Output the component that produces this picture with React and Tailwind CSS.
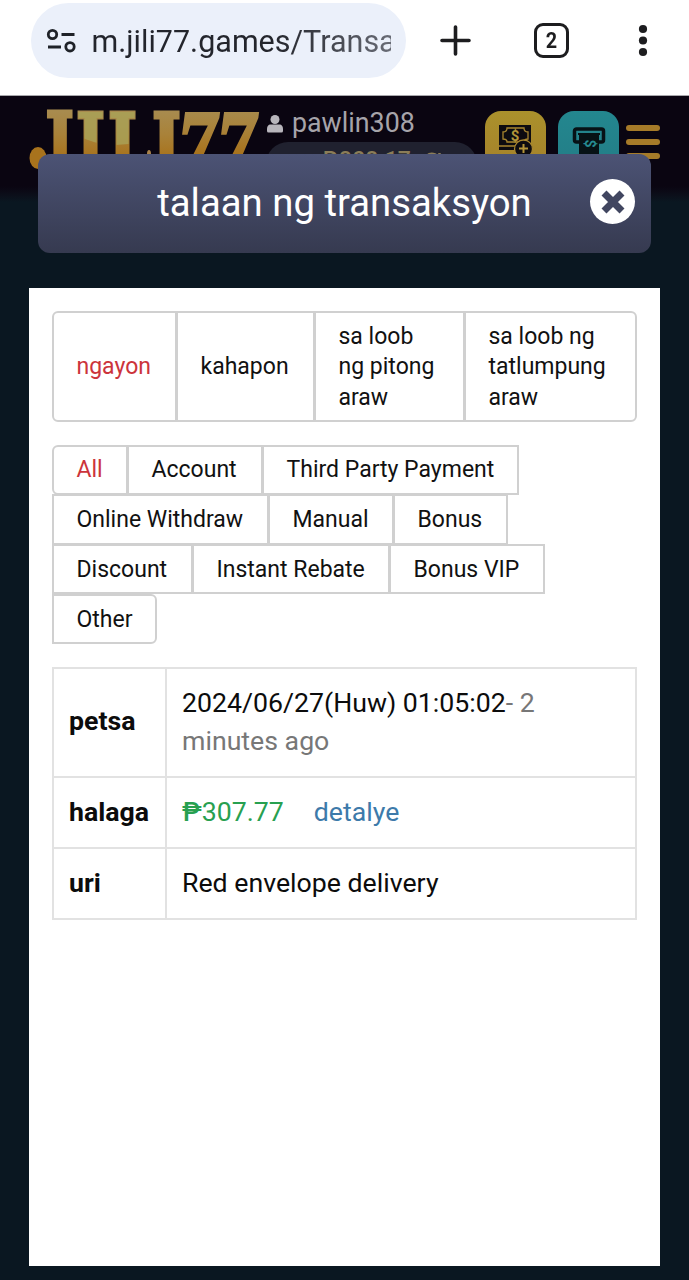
import React from "react";

const dateTabs = [
  { label: "ngayon", size: "w-[125px] rounded-l-md", active: true },
  { label: "kahapon", size: "w-[139px] -ml-px" },
  { label: "sa loob ng pitong araw", size: "w-[151px] -ml-px" },
  { label: "sa loob ng tatlumpung araw", size: "w-[173px] -ml-px rounded-r-md" },
];

const typeRows = [
  [
    { label: "All", size: "w-[76px] rounded-l-md", active: true },
    { label: "Account", size: "w-[136px] -ml-px" },
    { label: "Third Party Payment", size: "w-[257px] -ml-px" },
  ],
  [
    { label: "Online Withdraw", size: "w-[217px]" },
    { label: "Manual", size: "w-[126px] -ml-px" },
    { label: "Bonus", size: "w-[115px] -ml-px" },
  ],
  [
    { label: "Discount", size: "w-[141px]" },
    { label: "Instant Rebate", size: "w-[198px] -ml-px" },
    { label: "Bonus VIP", size: "w-[156px] -ml-px" },
  ],
  [{ label: "Other", size: "w-[105px] rounded-r-md" }],
];

const SiteSettingsIcon = () => (
  <svg className="w-[30px] h-[26px] shrink-0" viewBox="0 0 30 26" fill="none" stroke="#1f2228" strokeWidth="2.8">
    <circle cx="6.500" cy="6.500" r="4.2" />
    <path d="M15.500 6.500h13M2 19h13" />
    <circle cx="24" cy="18.800" r="4.200" />
  </svg>
);

const BrowserBar = () => (
  <div className="flex items-start h-24 pt-[3px] bg-white border-b border-[#a8a8ac]">
    <div className="flex items-center ml-[31px] w-[375px] h-[75px] rounded-full bg-[#ebf0fa] pl-[15px]">
      <SiteSettingsIcon />
      <div className="ml-[15.500px] mt-[3px] w-[299px] overflow-hidden whitespace-nowrap text-[30.500px] leading-[40px] bg-linear-to-r from-[#23252c] from-60% to-[#686b75] bg-clip-text text-transparent">
        m.jili77.games/Transaction
      </div>
    </div>
    <svg className="ml-[34px] mt-[22px] w-[31px] h-[31px]" viewBox="0 0 31 31" stroke="#1d1d1f" strokeWidth="3.6" strokeLinecap="round">
      <path d="M15.500 2v27M2 15.500h27" />
    </svg>
    <div className="ml-[63px] mt-5 w-[35px] h-[35px] rounded-[9px] border-[3.500px] border-[#1d1d1f] flex items-center justify-center text-[22px] leading-none font-bold text-[#1d1d1f]">
      <span className="scale-x-90">2</span>
    </div>
    <svg className="ml-[69px] mt-[21px] w-[10px] h-[33px]" viewBox="0 0 10 33" fill="#1d1d1f">
      <circle cx="5" cy="5" r="4.100" />
      <circle cx="5" cy="16.500" r="4.100" />
      <circle cx="5" cy="28" r="4.100" />
    </svg>
  </div>
);

const Logo = () => (
  <svg
    className="w-[234px] h-[80px] shrink-0"
    viewBox="0 0 234 80"
    fontFamily="DejaVu Serif, serif"
    fontWeight="bold"
    fill="url(#gold)"
    stroke="url(#gold)"
    strokeWidth="3"
  >
    <defs>
      <linearGradient id="gold" gradientUnits="userSpaceOnUse" x1="0" y1="-75" x2="0" y2="0">
        <stop offset="0" stopColor="#a88b4e" />
        <stop offset="0.3" stopColor="#a98239" />
        <stop offset="0.6" stopColor="#a8731d" />
        <stop offset="1" stopColor="#9c671a" />
      </linearGradient>
      <clipPath id="letters">
        <text transform="translate(47.500 80) scale(0.63 1)" fontSize="102">I</text>
        <text transform="translate(79.500 80) scale(0.63 1)" fontSize="102">L</text>
      </clipPath>
    </defs>
    <text transform="translate(17 80) scale(0.6 1)" fontSize="102">J</text>
    <text transform="translate(47.500 80) scale(0.63 1)" fontSize="102">I</text>
    <text transform="translate(79.500 80) scale(0.63 1)" fontSize="102">L</text>
    <text transform="translate(123.500 80) scale(0.63 1)" fontSize="102">I</text>
    <g fontFamily="Liberation Serif, serif" fontStyle="italic">
      <text transform="translate(149 76) scale(0.74 1)" fontSize="106">7</text>
      <text transform="translate(188 76) scale(0.74 1)" fontSize="106">7</text>
    </g>
    <ellipse cx="10" cy="51" rx="8.500" ry="11" fill="#a8731d" stroke="none" />
    <ellipse cx="121" cy="47" rx="2" ry="4" fill="#a8824a" stroke="none" />
    <ellipse cx="88" cy="2" rx="56" ry="36" fill="#a9a358" fillOpacity="0.8" stroke="none" clipPath="url(#letters)" />
  </svg>
);

const DepositIcon = () => (
  <svg className="w-[36px] h-[36px]" viewBox="0 0 36 36" fill="none">
    <path d="M1 1h32v25H1z" fill="#0d0b10" />
    <path d="M9 4h17c0 3 2 4 4 4v7c-2 0-4 1-4 3H9c0-2-2-3-4-3V8c2 0 4-1 4-4z" stroke="#a8862f" strokeWidth="1.300" />
    <text x="17" y="17" textAnchor="middle" fontSize="15" fontWeight="bold" fill="#b39438">$</text>
    <path d="M1 22h20" stroke="#a8862f" strokeWidth="1.500" />
    <circle cx="25.500" cy="25" r="9" fill="#0d0b10" stroke="#a8862f" strokeWidth="1.300" />
    <path d="M25.500 20v9M21 24.500h9" stroke="#b39438" strokeWidth="2" />
  </svg>
);

const WithdrawIcon = () => (
  <svg className="w-[34px] h-[36px]" viewBox="0 0 34 36" fill="none">
    <rect x="2.500" y="2" width="29" height="13" rx="2" stroke="#071216" strokeWidth="3.500" />
    <path d="M6 7h22" stroke="#071216" strokeWidth="2" />
    <path d="M7 6h20v30H7z" fill="#071216" />
    <text transform="translate(17 16.500) rotate(90)" x="0" y="4.500" textAnchor="middle" fontSize="14" fontWeight="bold" fill="#268b91">$</text>
  </svg>
);

const SiteHeader = () => (
  <div className="flex items-start h-[106px] bg-linear-to-b from-[#0a0511] from-85% to-[#0a1721]">
    <div className="pl-[28px] pt-[11px]">
      <Logo />
    </div>
    <div className="ml-[4px] w-[211px]">
      <div className="flex items-center h-[46px] pt-[8px] text-[26.800px] text-[#a6a4aa]">
        <svg className="w-4 h-[18px] mt-0.5 ml-px mr-[9px]" viewBox="0 0 16 18" fill="#b8b6bc">
          <circle cx="8" cy="4.500" r="4.500" />
          <path d="M4 9.500h8c3 0 4 2 4 5v1.500q0 1.500-1.500 1.500h-13Q0 17.500 0 16v-1.500c0-3 1-5 4-5z" />
        </svg>
        pawlin308
      </div>
      <div className="h-[44px] rounded-full bg-[#20212f] flex items-start justify-center pt-[6px] pl-5 text-[23px] leading-[26px] font-medium text-[#8b7d58]">
        ₱308.17
        <svg className="ml-[12px] mt-[4px] w-[18px] h-[18px]" viewBox="0 0 18 18" fill="none" stroke="#8b7d58" strokeWidth="2.500">
          <path d="M15.500 6A7.300 7.300 0 1 0 16 11M16.500 1v5.500h-5.500" />
        </svg>
      </div>
    </div>
    <div className="ml-[8px] mt-[15px] w-[61px] h-[61px] rounded-2xl bg-linear-to-b from-[#aa912c] to-[#a5802a] flex justify-center pt-[13px]">
      <DepositIcon />
    </div>
    <div className="ml-[12px] mt-[15px] w-[61px] h-[61px] rounded-2xl bg-linear-to-b from-[#23878f] to-[#237d86] flex justify-center pt-[16px]">
      <WithdrawIcon />
    </div>
    <div className="ml-[7px] mt-[29px] flex flex-col gap-2">
      <div className="w-[34px] h-1.5 rounded-full bg-[#a67b29]" />
      <div className="w-[34px] h-1.5 rounded-full bg-[#a67b29]" />
      <div className="w-[34px] h-1.5 rounded-full bg-[#a67b29]" />
    </div>
  </div>
);

const TitleBar = () => (
  <div className="relative z-10 -mt-12 ml-[38px] w-[613px] h-[99px] rounded-[12px] bg-linear-to-b from-[#4c5375] to-[#363a50] flex items-center text-white">
    <div className="w-[613px] text-center text-[38.300px] leading-none">talaan ng transaksyon</div>
    <button className="absolute right-[16px] top-[25px] w-[45px] h-[45px] rounded-full bg-white flex items-center justify-center">
      <svg className="w-6 h-6" viewBox="0 0 24 24" stroke="#414660" strokeWidth="7" strokeLinecap="butt">
        <path d="M3 3l18 18M21 3l-18 18" />
      </svg>
    </button>
  </div>
);

const Tab = ({ tab, className }) => (
  <button
    className={`flex items-center text-left border-2 border-[#d0d0d0] pt-[2px] text-[23px] ${
      tab.active ? "text-[#cc343b]" : "text-[#111]"
    } ${tab.size} ${className}`}
  >
    {tab.label}
  </button>
);

const DetailsTable = () => (
  <table className="mt-[23.400px] w-[585px] table-fixed border-collapse text-[26.700px] text-[#0c0c0c]">
    <tbody>
      <tr className="h-[109px]">
        <th className="w-[113px] border-2 border-[#e2e2e2] pl-[15px] pb-[2px] text-left font-bold">petsa</th>
        <td className="border-2 border-[#e2e2e2] pl-[15px] pb-px leading-[38px]">
          2024/06/27(Huw) 01:05:02
          <span className="text-[#777]">
            - 2<br />
            minutes ago
          </span>
        </td>
      </tr>
      <tr className="h-[71px]">
        <th className="border-2 border-[#e2e2e2] pl-[15px] pb-px text-left font-bold">halaga</th>
        <td className="border-2 border-[#e2e2e2] pl-[15px] pb-px">
          <span className="text-[#28a050]">
            <span className="font-medium">₱</span>307.77
          </span>
          <a className="ml-[30px] text-[#3d7aaa]">detalye</a>
        </td>
      </tr>
      <tr className="h-[71px]">
        <th className="border-2 border-[#e2e2e2] pl-[15px] pb-px text-left font-bold">uri</th>
        <td className="border-2 border-[#e2e2e2] pl-[15px] pb-px">Red envelope delivery</td>
      </tr>
    </tbody>
  </table>
);

const App = () => {
  return (
    <div className="w-[689px] h-[1280px] overflow-hidden bg-[#0a1721] font-[Roboto,sans-serif]">
      <BrowserBar />
      <SiteHeader />
      <TitleBar />
      <div className="mt-[35px] ml-[29px] w-[631px] h-[978px] bg-white pl-[23px] pt-[23px]">
        <div className="flex h-[111px]">
          {dateTabs.map((tab) => (
            <Tab key={tab.label} tab={tab} className="pl-[22.500px] pr-[21px] leading-[30.500px]" />
          ))}
        </div>
        <div className="mt-[22.600px]">
          {typeRows.map((row, i) => (
            <div key={i} className="flex h-[50.300px] -mb-[0.600px]">
              {row.map((tab) => (
                <Tab key={tab.label} tab={tab} className="pl-[22.500px] whitespace-nowrap" />
              ))}
            </div>
          ))}
        </div>
        <DetailsTable />
      </div>
    </div>
  );
};

export default App;
